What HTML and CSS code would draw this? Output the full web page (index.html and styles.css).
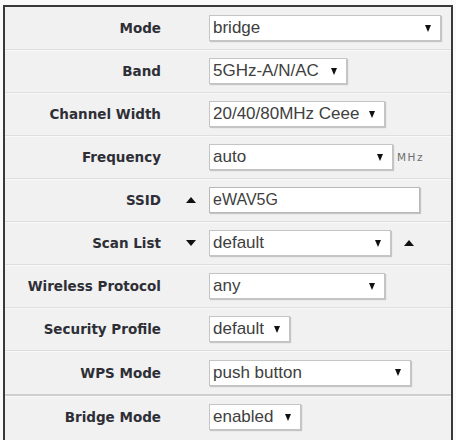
FILE: index.html
```html
<!DOCTYPE html>
<html>
<head>
<meta charset="utf-8">
<link rel="stylesheet" href="styles.css">
</head>
<body>
<div class="panel">
  <div class="row">
    <div class="label">Mode</div><div class="mid"></div>
    <div class="ctl"><div class="sel w-mode"><span>bridge</span><i class="caret"></i></div></div>
  </div>
  <div class="row">
    <div class="label">Band</div><div class="mid"></div>
    <div class="ctl"><div class="sel w-band"><span>5GHz-A/N/AC</span><i class="caret"></i></div></div>
  </div>
  <div class="row">
    <div class="label">Channel Width</div><div class="mid"></div>
    <div class="ctl"><div class="sel w-chan"><span>20/40/80MHz Ceee</span><i class="caret"></i></div></div>
  </div>
  <div class="row">
    <div class="label">Frequency</div><div class="mid"></div>
    <div class="ctl"><div class="sel w-freq"><span>auto</span><i class="caret"></i></div><span class="unit">MHz</span></div>
  </div>
  <div class="row">
    <div class="label">SSID</div><div class="mid"><i class="tri up"></i></div>
    <div class="ctl"><div class="input w-ssid">eWAV5G</div></div>
  </div>
  <div class="row">
    <div class="label">Scan List</div><div class="mid"><i class="tri down"></i></div>
    <div class="ctl"><div class="sel w-scan"><span>default</span><i class="caret"></i></div><i class="tri up after"></i></div>
  </div>
  <div class="row">
    <div class="label">Wireless Protocol</div><div class="mid"></div>
    <div class="ctl"><div class="sel w-proto"><span>any</span><i class="caret"></i></div></div>
  </div>
  <div class="row">
    <div class="label">Security Profile</div><div class="mid"></div>
    <div class="ctl"><div class="sel w-sec"><span>default</span><i class="caret"></i></div></div>
  </div>
  <div class="row section-end">
    <div class="label">WPS Mode</div><div class="mid"></div>
    <div class="ctl"><div class="sel w-wps"><span>push button</span><i class="caret"></i></div></div>
  </div>
  <div class="row last">
    <div class="label">Bridge Mode</div><div class="mid"></div>
    <div class="ctl"><div class="sel w-bridge"><span>enabled</span><i class="caret"></i></div></div>
  </div>
</div>
</body>
</html>
```
FILE: styles.css
```css
html, body {
  margin: 0;
  padding: 0;
  background: #fafafa;
}
body {
  padding: 5px 0 0 3px;
  width: 453px;
  height: 435px;
  overflow: hidden;
}
.panel {
  box-sizing: border-box;
  width: 450px;
  height: 435px;
  border: 2px solid #3a3a3a;
  border-bottom: none;
  background: #f1f1f1;
}
.row {
  display: grid;
  grid-template-columns: 156px 48px 1fr;
  align-items: center;
  height: 42px;
  border-bottom: 1px solid #dedede;
  box-shadow: 0 1px 0 #f8f8f8;
}
.row.section-end {
  border-bottom: 2px solid #cfcfcf;
  height: 43px;
}
.row.last {
  border-bottom: none;
  box-shadow: none;
}
.label {
  text-align: right;
  font-family: "DejaVu Sans", Verdana, sans-serif;
  font-weight: bold;
  font-size: 13.5px;
  color: #2e2f36;
  white-space: nowrap;
}
.mid {
  display: flex;
  justify-content: flex-end;
  padding-right: 13px;
}
.ctl {
  display: flex;
  align-items: center;
}
.sel, .input {
  box-sizing: border-box;
  height: 26px;
  background: #fff;
  border: 1px solid #c4c4c4;
  box-shadow: 1px 1px 1px rgba(0,0,0,0.18);
  display: flex;
  align-items: center;
  justify-content: space-between;
  padding: 0 9px 0 3px;
  font-family: "Liberation Sans", Arial, sans-serif;
  font-size: 17px;
  color: #404040;
  white-space: nowrap;
}
.input {
  font-size: 16px;
  padding-left: 3px;
  border-color: #b8b8b8;
}
.caret {
  width: 0;
  height: 0;
  border-left: 3.5px solid transparent;
  border-right: 3.5px solid transparent;
  border-top: 7px solid #111;
  flex: none;
}
.tri {
  width: 0;
  height: 0;
  border-left: 5px solid transparent;
  border-right: 5px solid transparent;
  display: block;
}
.tri.up { border-bottom: 6px solid #111; }
.tri.down { border-top: 6px solid #111; }
.tri.after { margin-left: 13px; }
.unit {
  margin-left: 4px;
  font-family: "DejaVu Sans", sans-serif;
  font-size: 10.5px;
  letter-spacing: 1.5px;
  color: #6e6e6e;
}
.w-mode { width: 232px; }
.w-band { width: 138px; }
.w-chan { width: 176px; }
.w-freq { width: 184px; }
.w-ssid { width: 211px; }
.w-scan { width: 182px; }
.w-proto { width: 176px; }
.w-sec { width: 81px; }
.w-wps { width: 202px; }
.w-bridge { width: 92px; }
```
